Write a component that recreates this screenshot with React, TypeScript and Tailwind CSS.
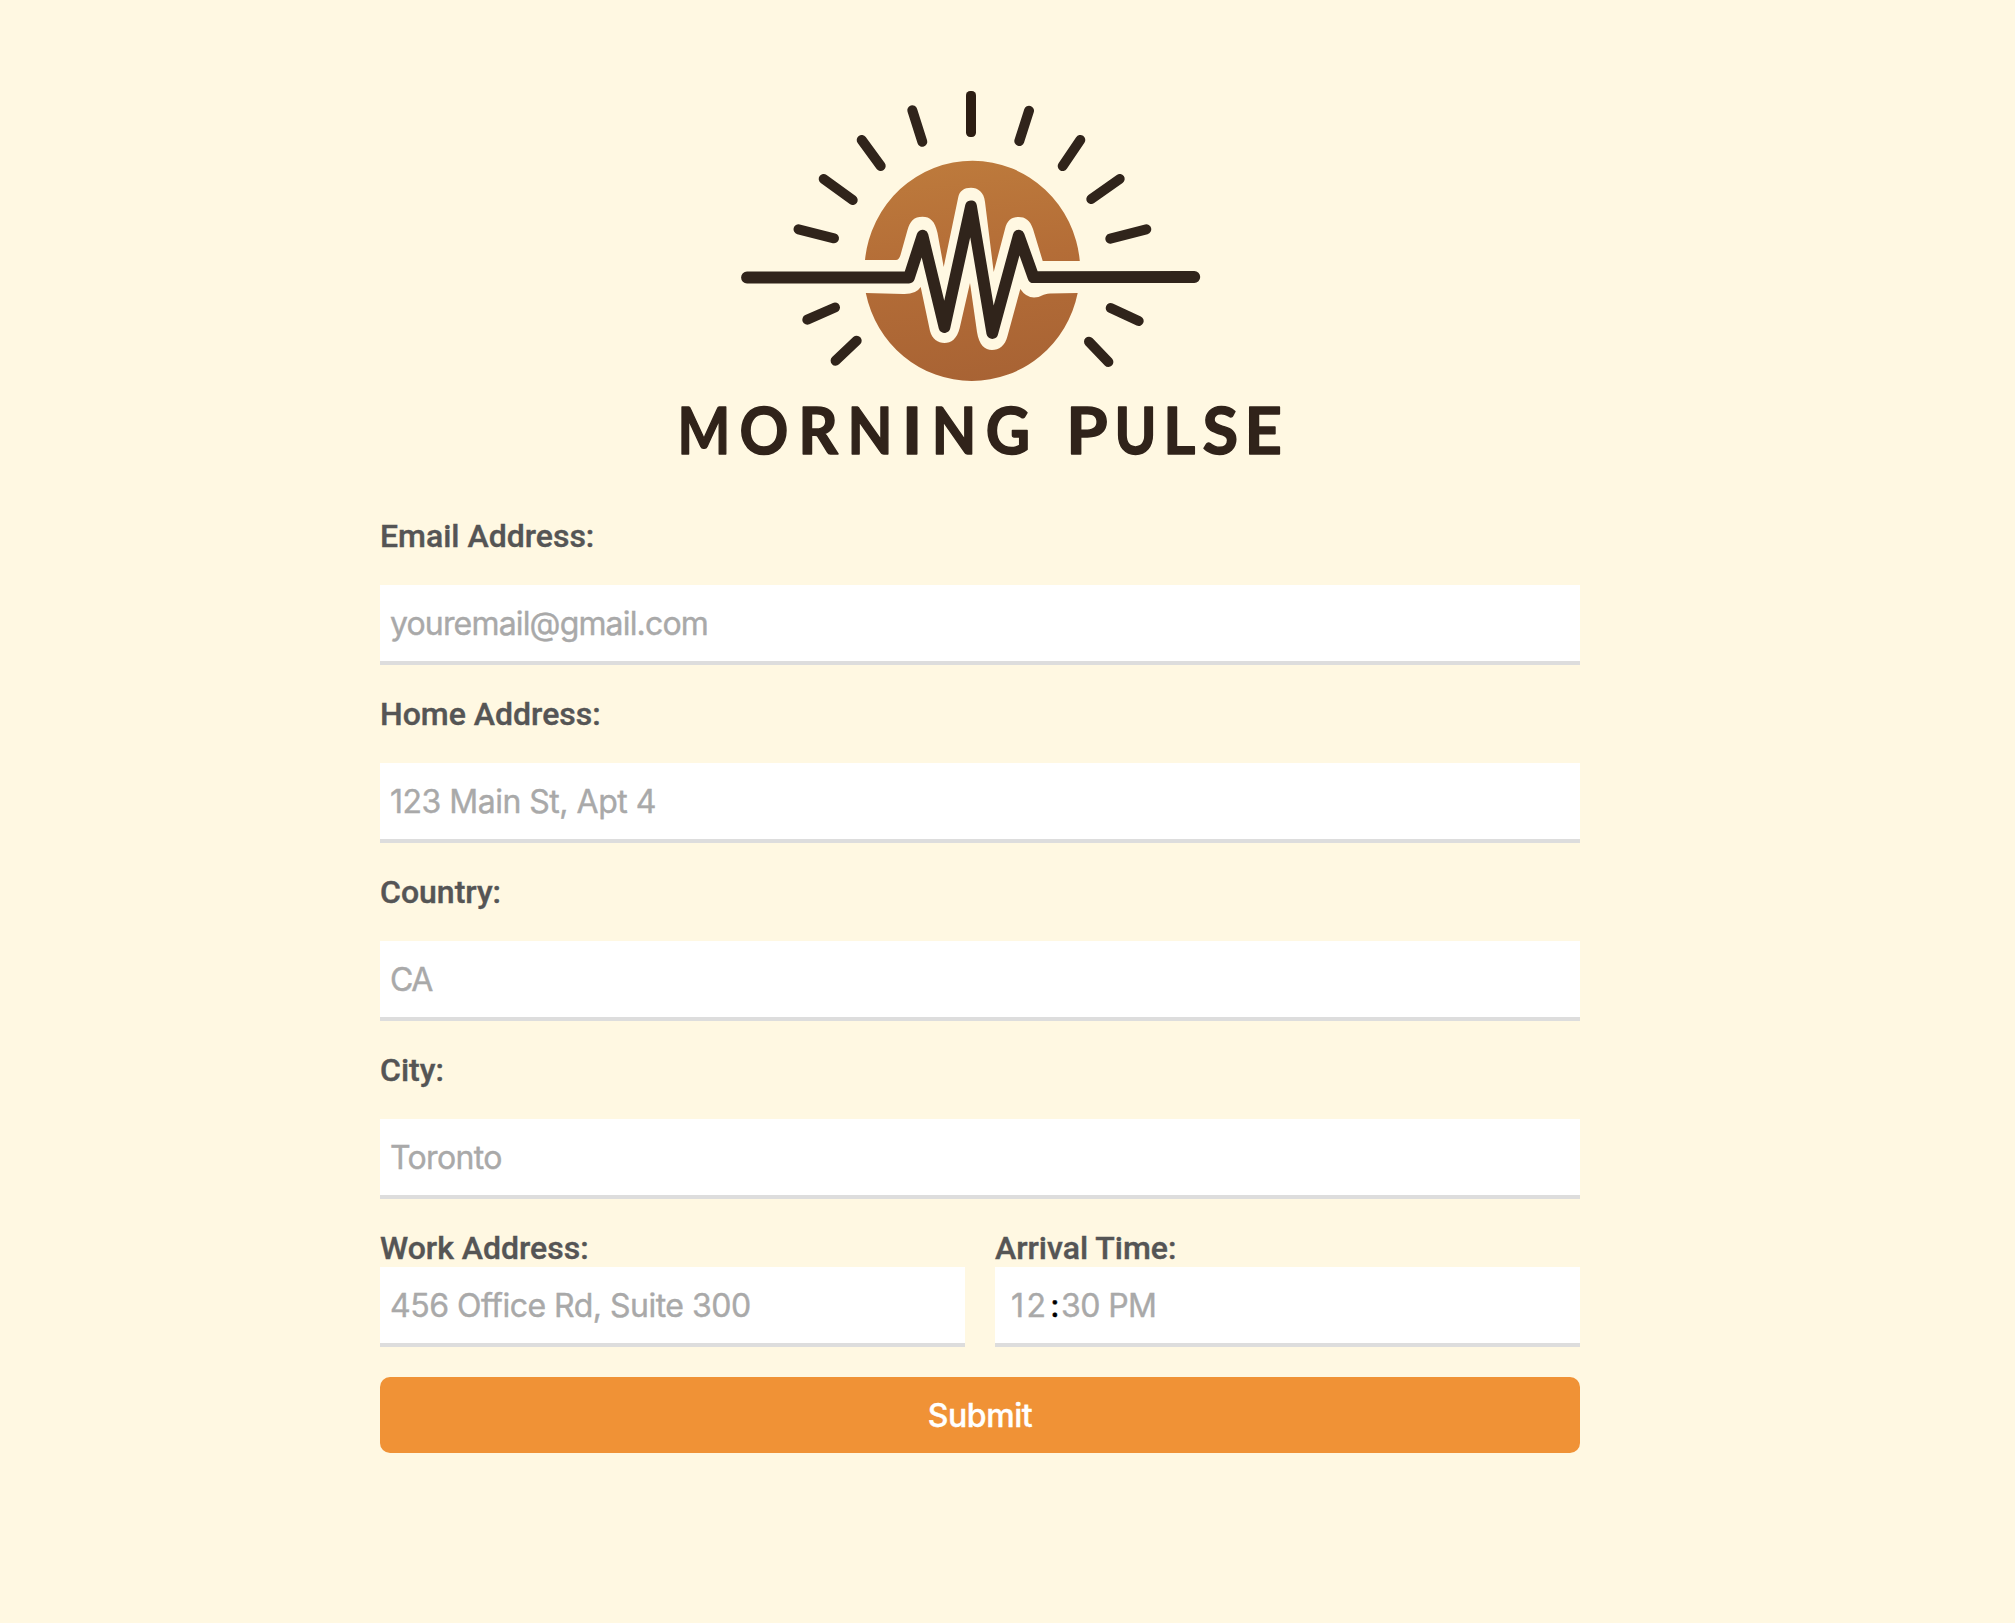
const RAYS: [number, number, number, number][] = [
  [912.3, 110.3, 922.3, 141.7],
  [861.7, 140, 880.7, 166],
  [823.7, 179, 852.7, 200],
  [798.5, 229.3, 834, 238.3],
  [1029, 110.7, 1019.3, 141],
  [1080.3, 140, 1062.7, 166],
  [1119.7, 179, 1091.3, 199],
  [1146.3, 229.3, 1110.3, 238.7],
  [835, 307.5, 807.3, 319.7],
  [856.7, 340.7, 835.6, 360.7],
  [1110.7, 308, 1138.7, 321],
  [1089, 341.7, 1108.4, 362],
];

// letter, horizontal centre, horizontal scale
const LETTERS: [string, number, number][] = [
  ["M", 703.8, 0.86],
  ["O", 763.8, 0.93],
  ["R", 818, 0.95],
  ["N", 870, 0.9],
  ["I", 912.2, 1.05],
  ["N", 954, 0.89],
  ["G", 1007.8, 0.94],
  ["P", 1087, 1.03],
  ["U", 1135.4, 0.87],
  ["L", 1179.3, 0.95],
  ["S", 1220.3, 1],
  ["E", 1263.3, 1],
];

function Logo() {
  return (
    <svg className="block h-[387px] w-[1200px]" viewBox="380 80 1200 387" role="img" aria-label="Morning Pulse">
      <defs>
        <linearGradient id="sun" x1="960" y1="160" x2="985" y2="381" gradientUnits="userSpaceOnUse">
          <stop offset="0" stopColor="#bd7a3c" />
          <stop offset="0.45" stopColor="#b46d37" />
          <stop offset="1" stopColor="#a86334" />
        </linearGradient>
      </defs>
      <g fill="url(#sun)">
        <path d="M865 260A107.9 110.4 0 0 1 1079.8 261L1042.7 261L1033 229C1030 220 1025 217 1018.7 217C1012 217 1007 220 1005 229L993.7 272L985 202C984 192 978 187.7 971 187.7C964 187.7 959.5 191 958.3 197L943.7 267L937.5 233C935 221 930 216.7 922.5 216.7C914 216.7 910 221 907.5 230L900.5 255Q899 260 896 260Z" />
        <path d="M865.8 293L903 294Q916 294.5 920.7 287L930 331C932 339 938 343 944.5 343C951 343 957 339 959.7 328L970 283L977 332C979 345 985 350 992 350C999 350 1005 346 1007.5 336L1020.3 289Q1026 297.5 1034 297.5C1041 297.5 1043 293.7 1050 293.5L1077.7 293A108.2 110.4 0 0 1 865.8 293Z" />
      </g>
      <g fill="none" stroke="#30241b" strokeLinecap="round" strokeLinejoin="round">
        <path
          strokeWidth="11.8"
          d="M747 277.5L909 277.5L922.5 235.7L944.5 327L971 206.3L992.3 333L1018.7 235.7L1033.5 277.2L1194.3 277"
        />
        {RAYS.map(([x1, y1, x2, y2], i) => (
          <line key={i} x1={x1} y1={y1} x2={x2} y2={y2} strokeWidth="10" />
        ))}
      </g>
      <rect x="966" y="91" width="10" height="46" rx="4.2" fill="#2c1d12" />
      <g
        className="font-['Lato'] text-[65px] font-bold"
        fill="#30231a"
        stroke="#30231a"
        strokeWidth="1.5"
        strokeLinejoin="round"
        textAnchor="middle"
      >
        {LETTERS.map(([ch, x, s], i) => (
          <text key={i} transform={`translate(${x} 453.5) scale(${s} 1)`}>
            {ch}
          </text>
        ))}
      </g>
    </svg>
  );
}

const label =
  "block h-[38px] font-['Roboto',sans-serif] text-[32px] leading-[38px] font-medium text-[#555555] [-webkit-text-stroke:0.4px_#555555]";
const field =
  "block h-20 w-full border-b-4 border-[#dddddd] bg-white px-2.5 font-['Inter',sans-serif] text-[32px] text-black outline-none placeholder:text-[#a9a9a9] placeholder:opacity-100 [-webkit-text-stroke:0.4px]";

function Field({ name, hint, spacing }: { name: string; hint: string; spacing: string }) {
  return (
    <div className="flex flex-col gap-[30px]">
      <label className={label}>{name}</label>
      <input className={`${field} ${spacing}`} placeholder={hint} />
    </div>
  );
}

export default function App() {
  return (
    <div className="min-h-[1623px] w-full bg-[#fff8e2] pt-20 pl-[380px]">
      <main className="flex w-[1200px] flex-col">
        <Logo />
        <form className="mt-[50px] flex flex-col gap-[30px]">
          <Field name="Email Address:" hint="youremail@gmail.com" spacing="tracking-[-0.84px]" />
          <Field name="Home Address:" hint="123 Main St, Apt 4" spacing="tracking-[-0.5px]" />
          <Field name="Country:" hint="CA" spacing="tracking-[-1.5px]" />
          <Field name="City:" hint="Toronto" spacing="tracking-[-0.65px]" />
          <div className="grid grid-cols-2 gap-[30px]">
            <div>
              <label className={label}>Work Address:</label>
              <input className={`${field} tracking-[-0.5px]`} placeholder="456 Office Rd, Suite 300" />
            </div>
            <div>
              <label className={label}>Arrival Time:</label>
              <div className={`${field} flex items-center pt-0.5 tracking-[-0.6px]`}>
                <span className="ml-1.5 w-[37px] tracking-[2.6px] text-[#a9a9a9]">12</span>
                <span className="w-[13px] text-center">:</span>
                <span className="text-[#a9a9a9]">30 PM</span>
              </div>
            </div>
          </div>
          <button
            type="button"
            className="h-[76px] w-full rounded-[10px] bg-[#f09236] pt-0.5 font-['Inter',sans-serif] text-[32px] font-medium tracking-[-0.4px] text-white [-webkit-text-stroke:0.4px]"
          >
            Submit
          </button>
        </form>
      </main>
    </div>
  );
}
